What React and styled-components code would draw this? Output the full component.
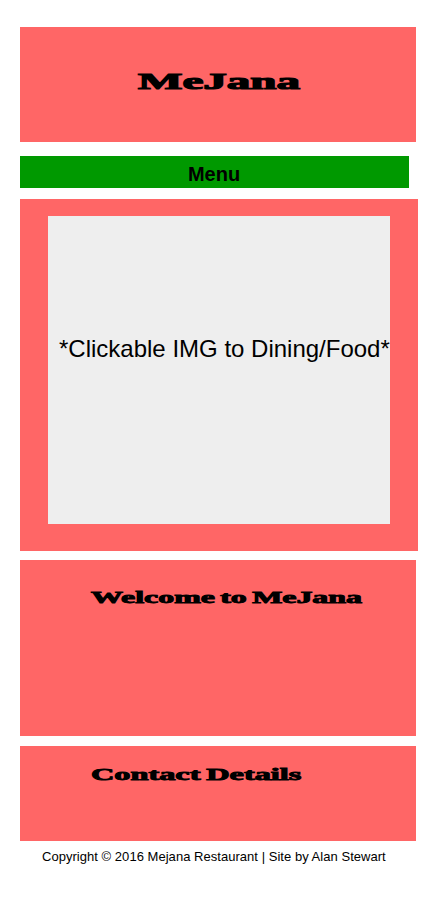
import React from 'react';
import styled, { createGlobalStyle } from 'styled-components';

const Global = createGlobalStyle`
  * { box-sizing: border-box; }
  body { margin: 0; background: #fff; color: #000; font-family: "Liberation Sans", Arial, sans-serif; }
`;
const Page = styled.main`
  display: flex; flex-direction: column; width: 440px; height: 900px; padding: 27px 0 0 20px;
`;
const Panel = styled.section`
  width: ${p => p.$width || 396}px; height: ${p => p.$height}px;
  margin-bottom: ${p => p.$gap || 0}px; padding: ${p => p.$pad};
  background: #ff6666;
`;
const Title = styled.h2`
  display: block; margin: 0; width: max-content; white-space: nowrap;
  font: 700 ${p => p.$size}px/1.2 "Liberation Serif", "Times New Roman", serif;
  -webkit-text-stroke: ${p => p.$stroke}px #000;
  word-spacing: ${p => p.$word || 0}px;
  transform: scaleX(${p => p.$sx}); transform-origin: 0 0;
`;
const MenuBar = styled.nav`
  width: 389px; height: 32px; margin: 0 0 11px; padding: 2px 1px 0 0;
  background: #009900; text-align: center; font-size: 20px; line-height: 32px; font-weight: bold;
`;
const ImageLink = styled.div`
  width: 342px; height: 308px; padding: 119px 0 0 11px; background: #eeeeee;
  font-size: 24px; line-height: 28px; white-space: nowrap;
`;
const Footer = styled.footer`
  padding: 8px 0 0 22px; font-size: 13px; line-height: 16px; white-space: nowrap;
  letter-spacing: 0.035px;
`;

export default function App() {
  return (
    <Page>
      <Global />
      <Panel as="header" $height={115} $gap={14} $pad="40px 0 0 118px">
        <Title as="h1" $size={24} $stroke={1.2} $sx={1.96}>MeJana</Title>
      </Panel>
      <MenuBar>Menu</MenuBar>
      <Panel $width={398} $height={352} $gap={9} $pad="17px 0 0 28px">
        <ImageLink>*Clickable IMG to Dining/Food*</ImageLink>
      </Panel>
      <Panel $height={176} $gap={10} $pad="28px 0 0 71px">
        <Title $size={17} $stroke={0.9} $sx={1.875} $word={-1.4}>Welcome to MeJana</Title>
      </Panel>
      <Panel $height={95} $pad="19px 0 0 71px">
        <Title $size={17} $stroke={0.9} $sx={1.9} $word={-1.2}>Contact Details</Title>
      </Panel>
      <Footer>Copyright © 2016 Mejana Restaurant | Site by Alan Stewart</Footer>
    </Page>
  );
}
